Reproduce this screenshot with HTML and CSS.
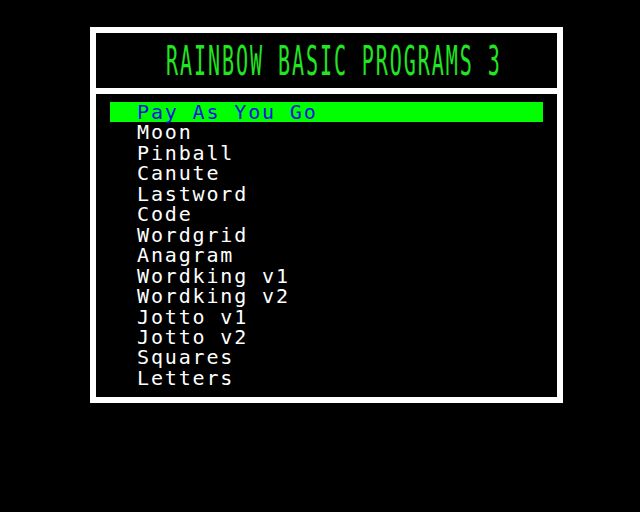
FILE: index.html
```html
<!DOCTYPE html>
<html>
<head>
<meta charset="utf-8">
<link rel="stylesheet" href="styles.css">
</head>
<body>
<div class="frame">
  <div class="header"><span class="title">RAINBOW BASIC PROGRAMS 3</span></div>
  <ul class="menu">
    <li class="item selected">Pay As You Go</li>
    <li class="item">Moon</li>
    <li class="item">Pinball</li>
    <li class="item">Canute</li>
    <li class="item">Lastword</li>
    <li class="item">Code</li>
    <li class="item">Wordgrid</li>
    <li class="item">Anagram</li>
    <li class="item">Wordking v1</li>
    <li class="item">Wordking v2</li>
    <li class="item">Jotto v1</li>
    <li class="item">Jotto v2</li>
    <li class="item">Squares</li>
    <li class="item">Letters</li>
  </ul>
</div>
</body>
</html>
```
FILE: styles.css
```css
html, body {
  margin: 0;
  padding: 0;
  background: #000;
  width: 640px;
  height: 512px;
  overflow: hidden;
}
.frame {
  box-sizing: border-box;
  margin: 27px 0 0 90px;
  width: 473px;
  height: 376px;
  border: 6px solid #fff;
  display: flex;
  flex-direction: column;
}
.header {
  height: 55px;
  flex: none;
  border-bottom: 6px solid #fff;
  display: flex;
  align-items: center;
  padding-left: 70px;
}
.title {
  display: inline-block;
  font-family: "DejaVu Sans Mono", monospace;
  font-size: 20px;
  letter-spacing: 1.95px;
  line-height: 20px;
  color: #22e622;
  transform: scaleY(2.05);
  white-space: pre;
}
.menu {
  list-style: none;
  margin: 0;
  padding: 8px 14px 0 14px;
}
.item {
  font-family: "DejaVu Sans Mono", monospace;
  font-size: 20px;
  line-height: 20.46px;
  letter-spacing: 1.85px;
  color: #fff;
  padding-left: 27px;
  white-space: pre;
}
.selected {
  background: #00ff00;
  color: #1010e8;
}
```
